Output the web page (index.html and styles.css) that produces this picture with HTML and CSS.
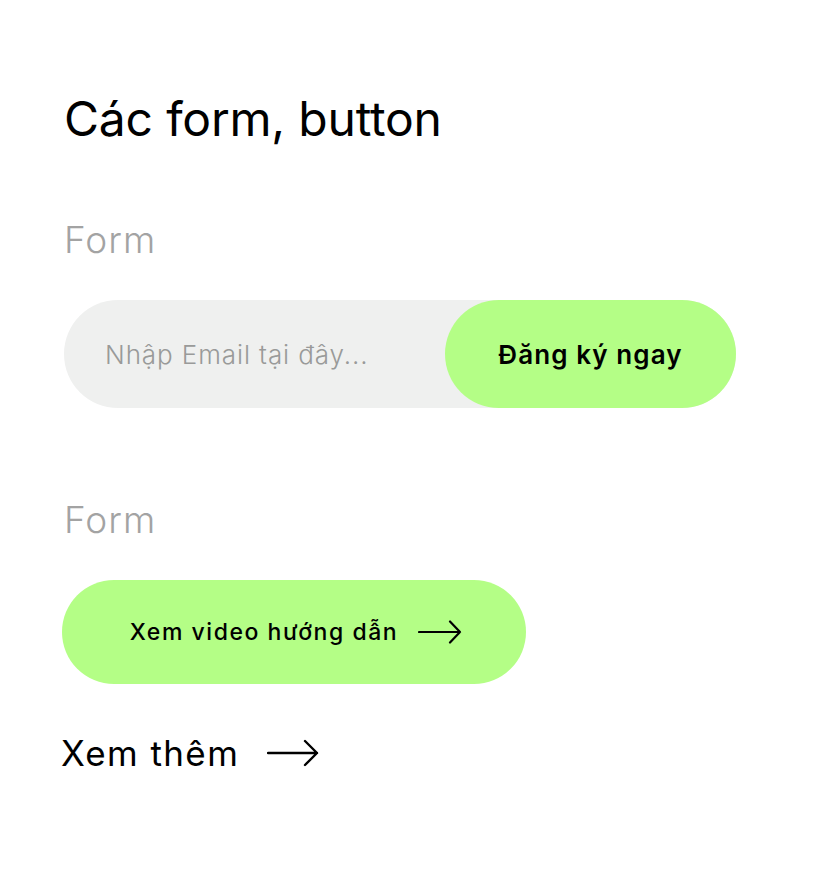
FILE: index.html
```html
<!DOCTYPE html>
<html lang="vi">
<head>
<meta charset="utf-8">
<title>Các form, button</title>
<link rel="stylesheet" href="styles.css">
</head>
<body>
<main class="page">
  <h1 class="title">Các form, button</h1>

  <section class="group group-form">
    <h2 class="label">Form</h2>
    <form class="subscribe">
      <input class="subscribe-input" type="email" placeholder="Nhập Email tại đây...">
      <button class="subscribe-btn" type="button">Đăng ký ngay</button>
    </form>
  </section>

  <section class="group group-button">
    <h2 class="label">Form</h2>
    <button class="video-btn" type="button">
      <span>Xem video hướng dẫn</span>
      <svg class="arrow arrow-sm" viewBox="0 0 44 24" width="44" height="24" fill="none" stroke="#000" stroke-width="2.2" stroke-linecap="round" stroke-linejoin="round"><path d="M1 12H42M32 1.5l10 10.5-10 10.5"/></svg>
    </button>
    <a class="more" href="#">
      <span>Xem thêm</span>
      <svg class="arrow arrow-lg" viewBox="0 0 52 28" width="52" height="28" fill="none" stroke="#000" stroke-width="2.4" stroke-linecap="round" stroke-linejoin="round"><path d="M1 14H50M38 2l12 12-12 12"/></svg>
    </a>
  </section>
</main>
</body>
</html>
```
FILE: styles.css
```css
* { box-sizing: border-box; }
html, body { margin: 0; padding: 0; background: #fff; }
body {
  font-family: "Inter", "Noto Sans", sans-serif;
  color: #000;
}
.page {
  padding: 87px 0 0 64px;
}
.title {
  margin: 0;
  font-size: 48px;
  font-weight: 400;
  line-height: 64px;
  letter-spacing: -0.2px;
}
.label {
  margin: 0;
  font-size: 37px;
  font-weight: 300;
  color: #a3a3a3;
  line-height: 48px;
  letter-spacing: 1px;
}
.group-form { margin-top: 65px; }
.subscribe {
  margin-top: 36px;
  display: flex;
  width: 672px;
  height: 108px;
  background: #eff0ef;
  border-radius: 54px;
}
.subscribe-input {
  flex: 1;
  min-width: 0;
  border: 0;
  background: transparent;
  padding: 0 0 0 41px;
  font-family: inherit;
  font-size: 26px;
  font-weight: 300;
  letter-spacing: 0.9px;
  color: #333;
  outline: none;
}
.subscribe-input::placeholder { color: #999a99; font-weight: 300; }
.subscribe-btn {
  width: 291px;
  border: 0;
  border-radius: 54px;
  background: #b4fe86;
  font-family: inherit;
  font-size: 26px;
  font-weight: 600;
  letter-spacing: 1.1px;
  color: #000;
  padding: 0;
}
.group-button { margin-top: 88px; }
.video-btn {
  margin-top: 36px;
  margin-left: -2px;
  display: flex;
  align-items: center;
  justify-content: center;
  gap: 20px;
  width: 464px;
  height: 104px;
  border: 0;
  border-radius: 52px;
  background: #b4fe86;
  font-family: inherit;
  font-size: 23px;
  font-weight: 500;
  letter-spacing: 1.55px;
  color: #000;
  padding: 0 0 0 4px;
}
.more {
  margin-top: 48px;
  margin-left: -3px;
  display: flex;
  align-items: center;
  gap: 28px;
  color: #000;
  text-decoration: none;
  font-size: 35px;
  font-weight: 400;
  letter-spacing: 1.4px;
}
.arrow { display: block; }
```
